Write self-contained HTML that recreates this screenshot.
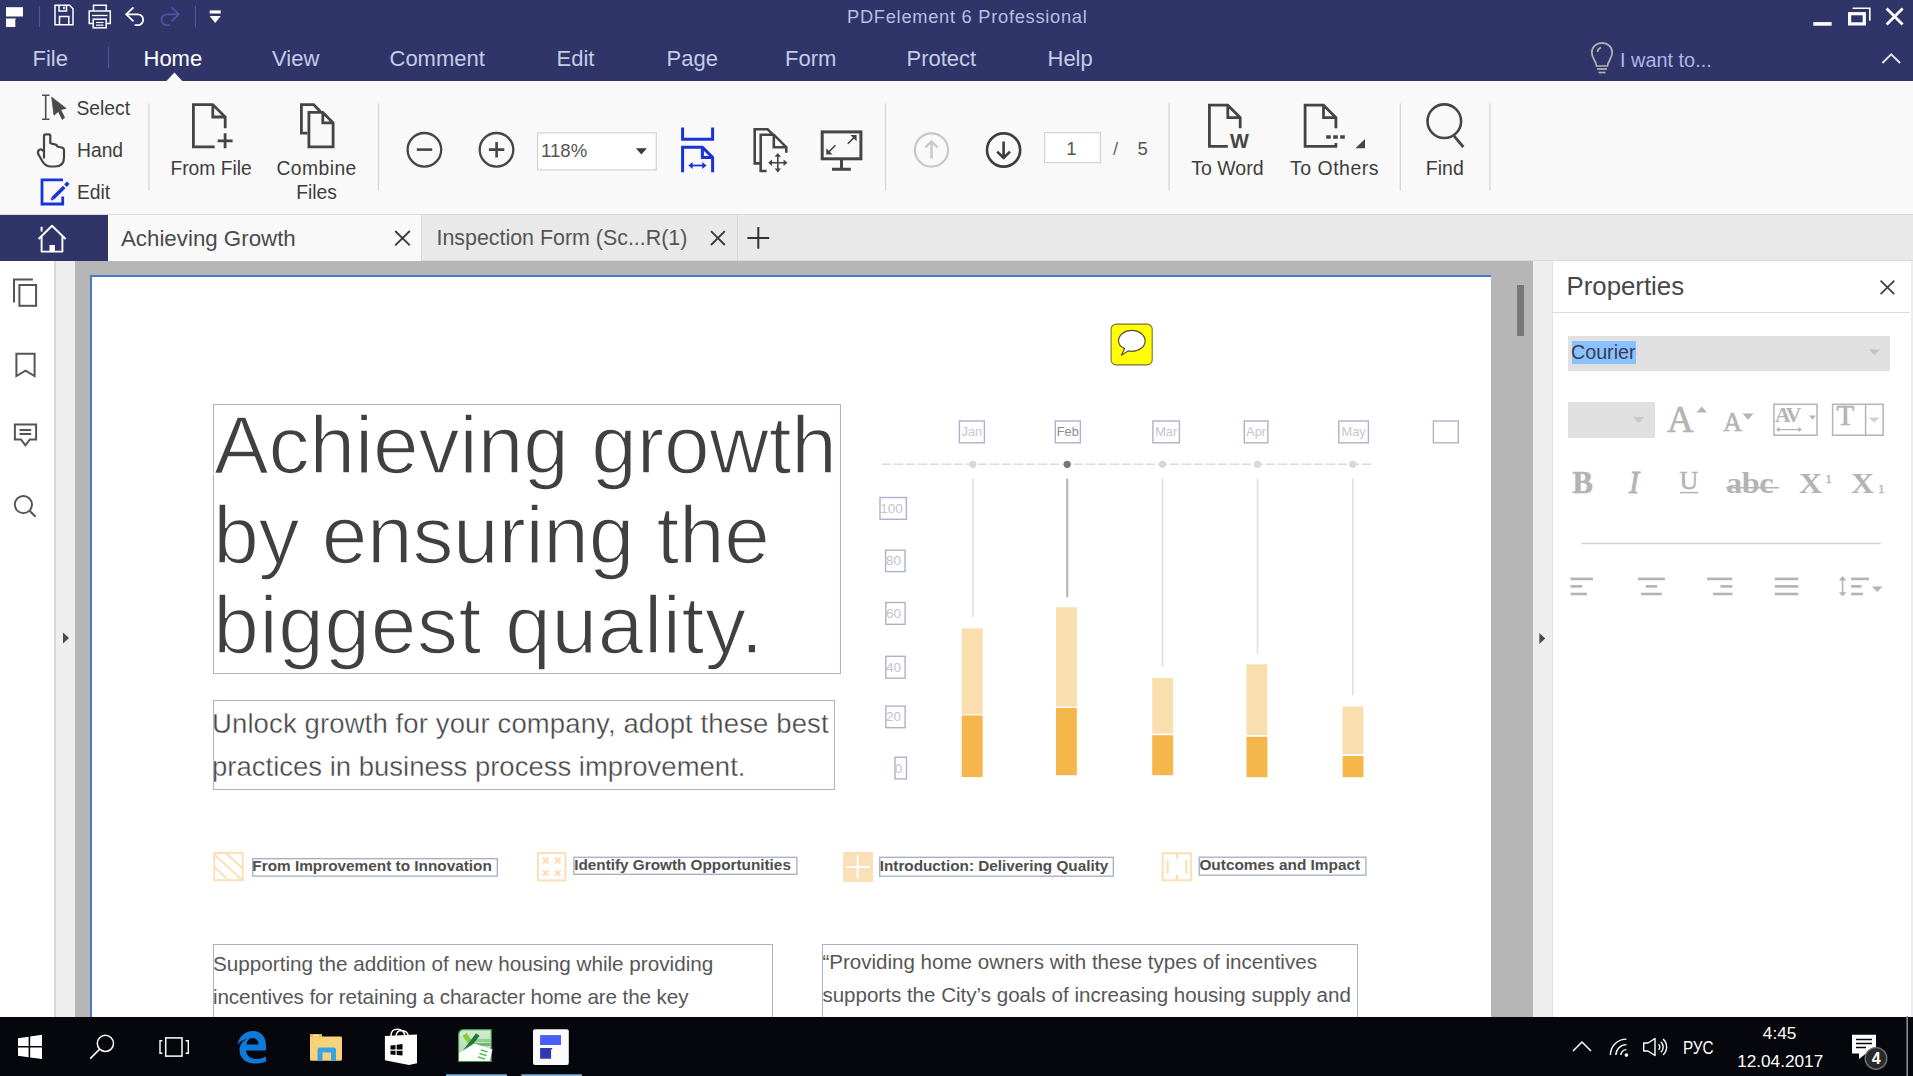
<!DOCTYPE html>
<html><head><meta charset="utf-8">
<style>
*{margin:0;padding:0;box-sizing:border-box}
html,body{width:1913px;height:1076px;overflow:hidden;background:#fff;font-family:"Liberation Sans",sans-serif}
.a{position:absolute}
.t{position:absolute;white-space:nowrap}
svg{overflow:visible}
</style></head><body>
<div class="a" style="left:0px;top:0px;width:1913px;height:81px;background:#2f3469;"></div>
<div class="a" style="left:0px;top:81px;width:1913px;height:134px;background:#f9f9f9;"></div>
<div class="a" style="left:0px;top:215px;width:1913px;height:46px;background:#e9e9e9;"></div>
<div class="a" style="left:0px;top:214px;width:1913px;height:1px;background:#dadada;"></div>
<div class="a" style="left:0px;top:261px;width:1913px;height:756px;background:#b6b6b6;"></div>
<div class="a" style="left:0px;top:261px;width:54px;height:756px;background:#ffffff;"></div>
<div class="a" style="left:54px;top:261px;width:2px;height:756px;background:#d9d9d9;"></div>
<div class="a" style="left:56px;top:261px;width:19px;height:756px;background:#eeeeee;"></div>
<div class="a" style="left:1533px;top:261px;width:19px;height:756px;background:#eeeeee;"></div>
<svg class="a" style="left:0px;top:0px" width="1913" height="81" viewBox="0 0 1913 81">
<rect x="6" y="7.2" width="17" height="9.3" fill="#ffffff"/>
<path d="M6 18.4 H16.3 L15.3 19.6 V27 H6 Z" fill="#ffffff"/>
<line x1="39.5" y1="6" x2="39.5" y2="27" stroke="#4d57a3" stroke-width="1.2"/>
<path d="M55 5.2 H69.5 L73 8.7 V24.8 H55 Z" fill="none" stroke="#ffffff" stroke-width="1.5"/>
<path d="M59 5.5 V11 H66.5 V5.5" fill="none" stroke="#ffffff" stroke-width="1.5"/>
<rect x="63.2" y="6.6" width="1.6" height="2.6" fill="#ffffff"/>
<path d="M59.5 24.8 V16.5 H68.8 V24.8" fill="none" stroke="#ffffff" stroke-width="1.5"/>
<path d="M93.5 10.8 V5.2 H106.3 V10.8" fill="none" stroke="#ffffff" stroke-width="1.5"/>
<path d="M93 23.5 H89.2 V11 H110.3 V23.5 H106.5" fill="none" stroke="#ffffff" stroke-width="1.5"/>
<line x1="92" y1="15.5" x2="107.5" y2="15.5" stroke="#ffffff" stroke-width="1.3"/>
<rect x="93.2" y="19.2" width="13" height="8.6" fill="none" stroke="#ffffff" stroke-width="1.5"/>
<line x1="96" y1="22.5" x2="103.5" y2="22.5" stroke="#ffffff" stroke-width="1.2"/>
<line x1="96" y1="25.2" x2="103.5" y2="25.2" stroke="#ffffff" stroke-width="1.2"/>
<path d="M133.5 7.3 L126.2 14.3 L133.5 21.3 M126.2 14.3 H137.8 A5.4 5.4 0 0 1 137.8 25.1 H134.6" fill="none" stroke="#ffffff" stroke-width="1.8"/>
<path d="M171.5 7.3 L178.8 14.3 L171.5 21.3 M178.8 14.3 H166.8 A5.4 5.4 0 0 0 166.8 25.1 H170" fill="none" stroke="#4b56a6" stroke-width="1.8"/>
<line x1="195.4" y1="6" x2="195.4" y2="26.7" stroke="#4d57a3" stroke-width="1.2"/>
<rect x="209.7" y="10.4" width="11" height="3.1" fill="#ffffff"/>
<path d="M209.7 16 H220.7 L215.2 22.9 Z" fill="#ffffff"/>
<rect x="1813.3" y="22.1" width="18.3" height="3.6" fill="#ffffff"/>
<rect x="1849.6" y="13.7" width="14.7" height="10.2" fill="none" stroke="#ffffff" stroke-width="3.2"/>
<path d="M1852.6 8.2 H1869.8 V20.7" fill="none" stroke="#ffffff" stroke-width="1.6"/>
<path d="M1886.6 8.6 L1902.6 24.6 M1902.6 8.6 L1886.6 24.6" stroke="#ffffff" stroke-width="2.8"/>
<line x1="108.5" y1="46.8" x2="108.5" y2="68.6" stroke="#4d57a3" stroke-width="1.2"/>
<path d="M166.5 81 L174.4 72.6 L182.3 81 Z" fill="#f9f9f9"/>
<path d="M1596.5 66 C1596.5 61 1591.8 59 1591.8 52.5 A10.2 9.6 0 0 1 1612.2 52.5 C1612.2 59 1607.5 61 1607.5 66 Z" fill="none" stroke="#b4b4b4" stroke-width="1.7"/>
<line x1="1597" y1="69" x2="1607" y2="69" stroke="#b4b4b4" stroke-width="1.7"/>
<line x1="1598.5" y1="72.5" x2="1605.5" y2="72.5" stroke="#b4b4b4" stroke-width="1.7"/>
<path d="M1597.5 52 A5 5 0 0 1 1601 47.5" fill="none" stroke="#b4b4b4" stroke-width="1.5"/>
<path d="M1882.4 63 L1891.2 54.3 L1900.1 63" fill="none" stroke="#e6e6e6" stroke-width="2"/>
</svg>
<div class="t " style="left:847px;top:8.31px;font-size:18.3px;line-height:18.3px;color:#b8bfe0;font-weight:400;font-family:'Liberation Sans';letter-spacing:0.72px;">PDFelement 6 Professional</div>
<div class="t " style="left:32.5px;top:48.38px;font-size:22px;line-height:22px;color:#c6cbe6;font-weight:400;font-family:'Liberation Sans';">File</div>
<div class="t " style="left:143.5px;top:48.38px;font-size:22px;line-height:22px;color:#ffffff;font-weight:400;font-family:'Liberation Sans';">Home</div>
<div class="t " style="left:272.0px;top:48.38px;font-size:22px;line-height:22px;color:#c6cbe6;font-weight:400;font-family:'Liberation Sans';">View</div>
<div class="t " style="left:389.5px;top:48.38px;font-size:22px;line-height:22px;color:#c6cbe6;font-weight:400;font-family:'Liberation Sans';">Comment</div>
<div class="t " style="left:556.5px;top:48.38px;font-size:22px;line-height:22px;color:#c6cbe6;font-weight:400;font-family:'Liberation Sans';">Edit</div>
<div class="t " style="left:666.5px;top:48.38px;font-size:22px;line-height:22px;color:#c6cbe6;font-weight:400;font-family:'Liberation Sans';">Page</div>
<div class="t " style="left:785.0px;top:48.38px;font-size:22px;line-height:22px;color:#c6cbe6;font-weight:400;font-family:'Liberation Sans';">Form</div>
<div class="t " style="left:906.5px;top:48.38px;font-size:22px;line-height:22px;color:#c6cbe6;font-weight:400;font-family:'Liberation Sans';">Protect</div>
<div class="t " style="left:1047.5px;top:48.38px;font-size:22px;line-height:22px;color:#c6cbe6;font-weight:400;font-family:'Liberation Sans';">Help</div>
<div class="t " style="left:1620px;top:50.55px;font-size:19.9px;line-height:19.9px;color:#a9b8e8;font-weight:400;font-family:'Liberation Sans';">I want to...</div>
<svg class="a" style="left:0px;top:81px" width="1913" height="134" viewBox="0 81 1913 134"><line x1="149" y1="103.5" x2="149" y2="190.5" stroke="#d6d6d6" stroke-width="1.3"/><line x1="378.5" y1="103.5" x2="378.5" y2="190.5" stroke="#d6d6d6" stroke-width="1.3"/><line x1="885.5" y1="103.5" x2="885.5" y2="190.5" stroke="#d6d6d6" stroke-width="1.3"/><line x1="1169" y1="103.5" x2="1169" y2="190.5" stroke="#d6d6d6" stroke-width="1.3"/><line x1="1400.3" y1="103.5" x2="1400.3" y2="190.5" stroke="#d6d6d6" stroke-width="1.3"/><line x1="1490" y1="103.5" x2="1490" y2="190.5" stroke="#d6d6d6" stroke-width="1.3"/>
<path d="M42 95.2 H49.5 M45.7 95.2 V119.2 M42 119.2 H49.5" fill="none" stroke="#505050" stroke-width="1.6"/>
<path d="M51.7 97.2 L66.2 108.4 L60.6 109.6 L64.6 117.6 L62.2 119.4 L58.4 111.4 L54 115.2 Z" fill="#4a4a4a" stroke="#4a4a4a" stroke-width="0.8" stroke-linejoin="round"/>
<path d="M44 158.5 V136 Q44 134.3 45.5 134.3 H49 Q50.3 134.3 50.3 136 V143.3 L55.6 144.6 Q57 145 57.3 146.5 L62.5 147.8 Q64 148.4 64 150 V157.5 Q64 166.5 55 166.5 H51 Q45.5 166.5 42.5 161.5 L38.2 154 Q37.2 151 39.5 149.8 Q42 148.6 43.8 151.5" fill="none" stroke="#454545" stroke-width="2.2" stroke-linejoin="round"/>
<path d="M63 179.9 H42 V204 H62.7 V196.5" fill="none" stroke="#1a33d6" stroke-width="2.8"/>
<path d="M52.6 198.6 L64.2 187" stroke="#1a33d6" stroke-width="3.6" stroke-linecap="butt"/>
<path d="M51.2 199.8 L52.6 198.6" stroke="#1a33d6" stroke-width="2.5"/>
<path d="M65.4 185.6 L68.3 182.8" stroke="#1a33d6" stroke-width="3.6"/>
<path d="M214.7 146.9 H193.4 V104.6 H212.8 L225.2 117 V128.3 M212.8 104.6 V117 H225.2" fill="none" stroke="#454545" stroke-width="2.8"/>
<path d="M217.6 140.8 H232.6 M225.1 133.3 V148.3" fill="none" stroke="#454545" stroke-width="2.8"/>
<path d="M307.5 133.1 H301.4 V104.6 H313.6 L320.4 111.6" fill="none" stroke="#454545" stroke-width="2.8"/>
<path d="M308.9 112.4 H322.8 L333.1 122.8 V146.9 H308.9 Z M322.8 112.4 V122.8 H333.1" fill="none" stroke="#454545" stroke-width="2.8"/>
<circle cx="424.4" cy="149.8" r="16.8" fill="none" stroke="#454545" stroke-width="2.3"/>
<path d="M416.8 149.6 H432.2" stroke="#454545" stroke-width="2.6"/>
<circle cx="496.5" cy="149.8" r="16.8" fill="none" stroke="#454545" stroke-width="2.3"/>
<path d="M488.9 149.6 H504.3 M496.6 142 V157.4" stroke="#454545" stroke-width="2.6"/>
<rect x="537.6" y="132.9" width="118.6" height="37" fill="#fff" stroke="#cbcbcb" stroke-width="1"/>
<path d="M635.9 148.3 H646.9 L641.4 154.6 Z" fill="#3a3a3a"/>
<path d="M682.6 127.4 V139.2 H712.6 V127.4" fill="none" stroke="#1a33d6" stroke-width="3"/>
<path d="M682.6 172.3 V147.3 H702.4 L712.6 157.4 V172.3 M702.4 147.3 V157.4 H712.6" fill="none" stroke="#1a33d6" stroke-width="3"/>
<path d="M691 165.5 H704" stroke="#1a33d6" stroke-width="1.8"/>
<path d="M688.4 165.5 L692.6 162 V169 Z M706.5 165.5 L702.3 162 V169 Z" fill="#1a33d6"/>
<path d="M760.2 163.4 H754.7 V129.2 H767.5 L772.5 134.2" fill="none" stroke="#454545" stroke-width="2.6"/>
<path d="M766.6 171 H760.7 V134.7 H773.8 L786.3 147.2 V152.7 M773.8 134.7 V147.2 H786.3" fill="none" stroke="#454545" stroke-width="2.6"/>
<path d="M777.8 154 V171.4 M769.2 162.7 H786.4" stroke="#454545" stroke-width="1.6"/>
<path d="M777.8 153 L774.6 156.8 H781 Z M777.8 172.4 L774.6 168.6 H781 Z M768.2 162.7 L772 159.5 V165.9 Z M787.4 162.7 L783.6 159.5 V165.9 Z" fill="#454545"/>
<rect x="822.2" y="131.9" width="38.7" height="26.9" fill="none" stroke="#454545" stroke-width="3"/>
<path d="M841.5 160 V169 M832 169.2 H850.8" stroke="#454545" stroke-width="3"/>
<path d="M828 152.8 L835.5 145.3 M847.8 143.8 L855 136.6" stroke="#454545" stroke-width="1.6"/>
<path d="M826.3 154.5 V148.3 L832.5 154.5 Z M856.6 135 V141.2 L850.4 135 Z" fill="#454545"/>
<circle cx="931.5" cy="150" r="16.6" fill="none" stroke="#c8c8c8" stroke-width="2.2"/>
<path d="M931.5 158.5 V141.5 M925.3 147.5 L931.5 141.5 L937.7 147.5" fill="none" stroke="#c8c8c8" stroke-width="2.4"/>
<circle cx="1003.6" cy="150" r="16.6" fill="none" stroke="#3d3d3d" stroke-width="2.6"/>
<path d="M1003.6 141.5 V158 M997.2 151.6 L1003.6 158 L1010 151.6" fill="none" stroke="#3d3d3d" stroke-width="2.6"/>
<rect x="1044.7" y="132.7" width="55.6" height="30" fill="#fff" stroke="#cbcbcb" stroke-width="1"/>
<path d="M1227.8 146.4 H1209.4 V105.2 H1227.8 L1240.2 117.6 V128.3 M1227.8 105.2 V117.6 H1240.2" fill="none" stroke="#454545" stroke-width="2.8"/>

<path d="M1337 146.4 H1305.1 V105.2 H1323.5 L1335.9 117.6 V128.3 M1323.5 105.2 V117.6 H1335.9 M1335.9 143 V147.8" fill="none" stroke="#454545" stroke-width="2.8"/>
<path d="M1326.2 137 H1345.5" stroke="#454545" stroke-width="3.6" stroke-dasharray="4.6 2.4"/>
<path d="M1355.4 148.3 L1365 139 V148.3 Z" fill="#454545"/>
<circle cx="1444.3" cy="121.2" r="16.8" fill="none" stroke="#454545" stroke-width="2.6"/>
<path d="M1454 135.8 L1463.3 147" stroke="#454545" stroke-width="2.8"/>
</svg>
<div class="t " style="left:76.5px;top:99.06px;font-size:19.3px;line-height:19.3px;color:#3d3d3d;font-weight:400;font-family:'Liberation Sans';">Select</div>
<div class="t " style="left:77px;top:141.16px;font-size:19.3px;line-height:19.3px;color:#3d3d3d;font-weight:400;font-family:'Liberation Sans';">Hand</div>
<div class="t " style="left:77px;top:183.46px;font-size:19.3px;line-height:19.3px;color:#3d3d3d;font-weight:400;font-family:'Liberation Sans';">Edit</div>
<div class="t" style="left:-88.9px;width:600px;text-align:center;top:158.96px;font-size:19.3px;line-height:19.3px;color:#3d3d3d;font-weight:400;">From File</div>
<div class="t" style="left:16.600000000000023px;width:600px;text-align:center;top:158.96px;font-size:19.3px;line-height:19.3px;color:#3d3d3d;font-weight:400;letter-spacing:0.45px;">Combine</div>
<div class="t" style="left:16.5px;width:600px;text-align:center;top:182.86px;font-size:19.3px;line-height:19.3px;color:#3d3d3d;font-weight:400;">Files</div>
<div class="t " style="left:541px;top:142.26px;font-size:18.6px;line-height:18.6px;color:#555;font-weight:400;font-family:'Liberation Sans';">118%</div>
<div class="t" style="left:771.5px;width:600px;text-align:center;top:139.86px;font-size:18.6px;line-height:18.6px;color:#555;font-weight:400;">1</div>
<div class="t " style="left:1113px;top:139.86px;font-size:18.6px;line-height:18.6px;color:#666;font-weight:400;font-family:'Liberation Sans';">/</div>
<div class="t " style="left:1137.5px;top:139.86px;font-size:18.6px;line-height:18.6px;color:#555;font-weight:400;font-family:'Liberation Sans';">5</div>
<div class="t" style="left:927.4000000000001px;width:600px;text-align:center;top:158.89px;font-size:19.5px;line-height:19.5px;color:#3d3d3d;font-weight:400;">To Word</div>
<div class="t" style="left:1034.5px;width:600px;text-align:center;top:158.89px;font-size:19.5px;line-height:19.5px;color:#3d3d3d;font-weight:400;letter-spacing:0.5px;">To Others</div>
<div class="t" style="left:1144.8px;width:600px;text-align:center;top:158.89px;font-size:19.5px;line-height:19.5px;color:#3d3d3d;font-weight:400;">Find</div>
<div class="t " style="left:1230px;top:130.87px;font-size:20px;line-height:20px;color:#454545;font-weight:700;font-family:'Liberation Sans';">W</div>
<div class="a" style="left:0px;top:215px;width:108px;height:46px;background:#2f3469;"></div>
<div class="a" style="left:108px;top:215px;width:314px;height:46px;background:#f9f9f9;"></div>
<div class="a" style="left:421px;top:215px;width:1px;height:46px;background:#d8d8d8;"></div>
<div class="a" style="left:737px;top:215px;width:1px;height:46px;background:#d6d6d6;"></div>
<div class="a" style="left:422px;top:260px;width:1491px;height:1px;background:#dadada;"></div>
<svg class="a" style="left:0px;top:215px" width="800" height="46" viewBox="0 215 800 46">
<path d="M38.6 239 L52 225.8 L65.6 239 M41.6 236 V251.6 H62.4 V236" fill="none" stroke="#fff" stroke-width="1.9" stroke-linejoin="round"/>
<path d="M41.6 231.5 V226.8" stroke="#fff" stroke-width="2"/>
<rect x="49.5" y="245" width="5.4" height="6.8" fill="#fff"/>
<path d="M395.2 231 L409.8 245.4 M409.8 231 L395.2 245.4" stroke="#3c3c3c" stroke-width="1.9"/>
<path d="M711 231.2 L724.8 245 M724.8 231.2 L711 245" stroke="#3c3c3c" stroke-width="1.9"/>
<path d="M747.4 238 H769.2 M758.3 227 V248.8" stroke="#333" stroke-width="2"/>
</svg>
<div class="t " style="left:121px;top:227.52px;font-size:22.3px;line-height:22.3px;color:#4a4a4a;font-weight:400;font-family:'Liberation Sans';">Achieving Growth</div>
<div class="t " style="left:436.5px;top:228.28px;font-size:21.4px;line-height:21.4px;color:#555555;font-weight:400;font-family:'Liberation Sans';">Inspection Form (Sc...R(1)</div>
<div class="a" style="left:90px;top:275px;width:1401px;height:742px;background:#ffffff;"></div>
<div class="a" style="left:90px;top:275px;width:1401px;height:2px;background:#4a79cb;"></div>
<div class="a" style="left:90px;top:275px;width:2px;height:742px;background:#4a79cb;"></div>
<div class="a" style="left:1516.5px;top:285px;width:7.5px;height:51px;background:#777777;"></div>
<svg class="a" style="left:0px;top:261px" width="1913" height="755" viewBox="0 261 1913 755">
<path d="M14 302.6 V279.6 H32.9" fill="none" stroke="#555555" stroke-width="2"/>
<rect x="19.4" y="285" width="16.7" height="20.8" fill="none" stroke="#555555" stroke-width="2"/>
<path d="M16.4 376 V353.8 H34.6 V376 L25.5 370.6 Z" fill="none" stroke="#555555" stroke-width="2" stroke-linejoin="miter"/>
<path d="M14.9 424.4 H36.1 V439.4 H29.8 L25.4 445.4 L21 439.4 H14.9 Z" fill="none" stroke="#555555" stroke-width="2"/>
<path d="M19.5 429.9 H31.2 M19.5 434.1 H31.2" stroke="#555555" stroke-width="2"/>
<circle cx="23.4" cy="504.6" r="8.6" fill="none" stroke="#555555" stroke-width="1.9"/>
<path d="M29.6 510.8 L35.6 516.8" stroke="#555555" stroke-width="2"/>
<path d="M63 632.6 L69 638 L63 643.5 Z" fill="#4a4a4a"/>
<path d="M1539.4 632.9 L1545.2 638.4 L1539.4 644 Z" fill="#4a4a4a"/>
</svg>
<div class="a" style="left:1552px;top:261px;width:1px;height:756px;background:#e4e4e4;"></div>
<div class="a" style="left:1553px;top:261px;width:360px;height:756px;background:#ffffff;"></div>
<div class="a" style="left:1911px;top:261px;width:2px;height:756px;background:#ececec;"></div>
<div class="t " style="left:1566.5px;top:273.66px;font-size:25.8px;line-height:25.8px;color:#474747;font-weight:400;font-family:'Liberation Sans';">Properties</div>
<div class="a" style="left:1552px;top:311.8px;width:358px;height:1.5px;background:#dcdcdc;"></div>
<div class="a" style="left:1567.5px;top:336.4px;width:322.3px;height:34.9px;background:#e0e0e0;"></div>
<div class="a" style="left:1571.8px;top:340.8px;width:64.7px;height:23px;background:#8ac2ff;"></div>
<div class="t " style="left:1571px;top:342.92px;font-size:19.7px;line-height:19.7px;color:#383c58;font-weight:400;font-family:'Liberation Sans';">Courier</div>
<div class="a" style="left:1567.5px;top:401.9px;width:87px;height:35.8px;background:#e0e0e0;"></div>
<svg class="a" style="left:1552px;top:261px" width="361" height="755" viewBox="1552 261 361 755">
<path d="M1880.6 280.6 L1894.3 294.2 M1894.3 280.6 L1880.6 294.2" stroke="#444" stroke-width="1.8"/>
<path d="M1869 349.6 H1880 L1874.5 355.3 Z" fill="#c4c4c4"/>
<path d="M1633 417 H1644.5 L1638.7 423 Z" fill="#c8c8c8"/>
<path d="M1696.4 412.6 H1707 L1701.7 406.4 Z" fill="#b4b4b4"/>
<path d="M1742.6 413.6 H1753.5 L1748 419.8 Z" fill="#b4b4b4"/>
<rect x="1773.9" y="404.3" width="43.1" height="30.9" fill="none" stroke="#b4b4b4" stroke-width="1.5"/>
<path d="M1778 429.6 H1800" stroke="#b4b4b4" stroke-width="1.3"/>
<path d="M1776 429.6 L1779.5 427 V432.2 Z M1802 429.6 L1798.5 427 V432.2 Z" fill="#b4b4b4"/>
<path d="M1809 415.5 H1816 L1812.5 419.8 Z" fill="#b4b4b4"/>
<rect x="1832.6" y="404.3" width="50.5" height="30.9" fill="none" stroke="#b4b4b4" stroke-width="1.5"/>
<path d="M1865.6 404.3 V435.2" stroke="#b4b4b4" stroke-width="1.5"/>
<path d="M1868.7 417.4 H1879.4 L1874 422.5 Z" fill="#d2d2d2"/>
<path d="M1680 492.6 H1698.3" stroke="#b4b4b4" stroke-width="1.5"/>
<path d="M1726 487.8 H1779" stroke="#b4b4b4" stroke-width="1.6"/>
<path d="M1581.3 543.6 H1880.7" stroke="#d2d2d2" stroke-width="1.5"/>
</svg>
<div class="t " style="left:1667px;top:400.58px;font-size:37px;line-height:37px;color:#b4b4b4;font-weight:400;font-family:'Liberation Serif';-webkit-text-stroke:0.7px #b4b4b4;">A</div>
<div class="t " style="left:1723px;top:409.47px;font-size:26.5px;line-height:26.5px;color:#b4b4b4;font-weight:400;font-family:'Liberation Serif';-webkit-text-stroke:0.6px #b4b4b4;">A</div>
<div class="t " style="left:1775px;top:405.00px;font-size:21.5px;line-height:21.5px;color:#b4b4b4;font-weight:700;font-family:'Liberation Serif';letter-spacing:-2px;">AV</div>
<div class="t " style="left:1836.5px;top:401.35px;font-size:29px;line-height:29px;color:#b4b4b4;font-weight:400;font-family:'Liberation Serif';-webkit-text-stroke:0.7px #b4b4b4;">T</div>
<div class="t " style="left:1572.5px;top:467.58px;font-size:30.5px;line-height:30.5px;color:#b4b4b4;font-weight:700;font-family:'Liberation Serif';-webkit-text-stroke:0.6px #b4b4b4;">B</div>
<div class="t " style="left:1629px;top:467.58px;font-size:30.5px;line-height:30.5px;color:#b4b4b4;font-weight:400;font-family:'Liberation Serif';font-style:italic;-webkit-text-stroke:0.8px #b4b4b4;">I</div>
<div class="t " style="left:1679.5px;top:468.19px;font-size:26px;line-height:26px;color:#b4b4b4;font-weight:400;font-family:'Liberation Serif';-webkit-text-stroke:0.5px #b4b4b4;">U</div>
<div class="t " style="left:1726px;top:468.21px;font-size:30px;line-height:30px;color:#b4b4b4;font-weight:700;font-family:'Liberation Serif';letter-spacing:-0.5px;transform:scaleX(1.08);transform-origin:0 0;">abc</div>
<div class="t " style="left:1798.5px;top:468.85px;font-size:29px;line-height:29px;color:#b4b4b4;font-weight:700;font-family:'Liberation Serif';transform:scaleX(1.1);transform-origin:0 0;">X</div>
<div class="t " style="left:1825.5px;top:473.02px;font-size:12.5px;line-height:12.5px;color:#b4b4b4;font-weight:400;font-family:'Liberation Serif';-webkit-text-stroke:0.4px #b4b4b4;">1</div>
<div class="t " style="left:1851px;top:468.85px;font-size:29px;line-height:29px;color:#b4b4b4;font-weight:700;font-family:'Liberation Serif';transform:scaleX(1.1);transform-origin:0 0;">X</div>
<div class="t " style="left:1878.3px;top:483.02px;font-size:12.5px;line-height:12.5px;color:#b4b4b4;font-weight:400;font-family:'Liberation Serif';-webkit-text-stroke:0.4px #b4b4b4;">1</div>
<svg class="a" style="left:1552px;top:540px" width="361" height="80" viewBox="1552 540 361 80"><path d="M1570.5 578.9 H1593" stroke="#b4b4b4" stroke-width="2.6"/><path d="M1570.5 586.4 H1582.2" stroke="#b4b4b4" stroke-width="2.6"/><path d="M1570.5 594 H1586.9" stroke="#b4b4b4" stroke-width="2.6"/><path d="M1638 578.9 H1664.9" stroke="#b4b4b4" stroke-width="2.6"/><path d="M1645.8 586.4 H1657.3" stroke="#b4b4b4" stroke-width="2.6"/><path d="M1641 594 H1661.8" stroke="#b4b4b4" stroke-width="2.6"/><path d="M1707.1 578.9 H1732.4" stroke="#b4b4b4" stroke-width="2.6"/><path d="M1720.5 586.4 H1732.4" stroke="#b4b4b4" stroke-width="2.6"/><path d="M1713 594 H1732.4" stroke="#b4b4b4" stroke-width="2.6"/><path d="M1774.7 578.9 H1798.3" stroke="#b4b4b4" stroke-width="2.6"/><path d="M1774.7 586.4 H1798.3" stroke="#b4b4b4" stroke-width="2.6"/><path d="M1774.7 594 H1798.3" stroke="#b4b4b4" stroke-width="2.6"/><path d="M1851.1 578.9 H1869" stroke="#b4b4b4" stroke-width="2.6"/><path d="M1851.1 586.4 H1861.5" stroke="#b4b4b4" stroke-width="2.6"/><path d="M1851.1 594 H1863" stroke="#b4b4b4" stroke-width="2.6"/><path d="M1842.6 578 V594.6" stroke="#b4b4b4" stroke-width="1.6"/><path d="M1842.6 576 L1838.8 580.4 H1846.4 Z M1842.6 596.6 L1838.8 592.2 H1846.4 Z" fill="#b4b4b4"/><path d="M1871.9 586.4 H1882.6 L1877.2 592.1 Z" fill="#b4b4b4"/></svg>
<div class="a" style="left:213px;top:404px;width:628px;height:270px;border:1px solid #aab3cb"></div>
<div class="t " style="left:214px;top:404.39px;font-size:82px;line-height:82px;color:#404040;font-weight:400;font-family:'Liberation Sans';letter-spacing:-0.1px;-webkit-text-stroke:1.6px #fff;">Achieving growth</div>
<div class="t " style="left:213.3px;top:494.49px;font-size:82px;line-height:82px;color:#404040;font-weight:400;font-family:'Liberation Sans';letter-spacing:-0.3px;-webkit-text-stroke:1.6px #fff;">by ensuring the</div>
<div class="t " style="left:213.3px;top:583.79px;font-size:82px;line-height:82px;color:#404040;font-weight:400;font-family:'Liberation Sans';letter-spacing:0.6px;-webkit-text-stroke:1.6px #fff;">biggest quality.</div>
<div class="a" style="left:213px;top:700px;width:622px;height:89.5px;border:1px solid #aab3cb"></div>
<div class="t " style="left:212px;top:709.62px;font-size:27.5px;line-height:27.5px;color:#454545;font-weight:400;font-family:'Liberation Sans';letter-spacing:0.12px;-webkit-text-stroke:0.35px #fff;">Unlock growth for your company, adopt these best</div>
<div class="t " style="left:212px;top:753.42px;font-size:27.5px;line-height:27.5px;color:#454545;font-weight:400;font-family:'Liberation Sans';-webkit-text-stroke:0.35px #fff;">practices in business process improvement.</div>
<svg class="a" style="left:860px;top:310px" width="640" height="480" viewBox="860 310 640 480"><rect x="1111.1" y="324.1" width="41.1" height="40.8" rx="5" fill="#ffff00" stroke="#7d6d45" stroke-width="1.1"/><path d="M1124.6 348.6 C1119.8 346.4 1118.5 343.6 1118.5 340.9 C1118.5 335 1124.4 330.4 1131.8 330.4 C1139.2 330.4 1145.1 335 1145.1 340.9 C1145.1 346.8 1139.2 351.3 1131.8 351.3 C1130.4 351.3 1129.2 351.2 1128 350.9 L1121.4 355.2 Z" fill="#ffffff" stroke="#5d4d35" stroke-width="1.2" stroke-linejoin="round"/><rect x="959.4" y="421" width="25.000000000000046" height="21.8" fill="none" stroke="#aab3cb" stroke-width="1.4"/><rect x="1055.3" y="421" width="25.099999999999955" height="21.8" fill="none" stroke="#aab3cb" stroke-width="1.4"/><rect x="1152.8999999999999" y="421" width="26.500000000000046" height="21.8" fill="none" stroke="#aab3cb" stroke-width="1.4"/><rect x="1244.3" y="421" width="23.599999999999955" height="21.8" fill="none" stroke="#aab3cb" stroke-width="1.4"/><rect x="1338.8" y="421" width="29.599999999999955" height="21.8" fill="none" stroke="#aab3cb" stroke-width="1.4"/><rect x="1433.3999999999999" y="421" width="24.900000000000137" height="21.8" fill="none" stroke="#aab3cb" stroke-width="1.4"/><path d="M882 464.3 H1373.4" stroke="#dadada" stroke-width="1.5" stroke-dasharray="9 3"/><circle cx="972.9" cy="464.3" r="3.6" fill="#d8d8d8"/><circle cx="1067.2" cy="464.3" r="3.6" fill="#787878"/><circle cx="1162.5" cy="464.3" r="3.6" fill="#d8d8d8"/><circle cx="1257.5" cy="464.3" r="3.6" fill="#d8d8d8"/><circle cx="1352.8" cy="464.3" r="3.6" fill="#d8d8d8"/><path d="M972.9 478.6 V617" stroke="#e0e0e0" stroke-width="1.6"/><path d="M1162.5 478.6 V666.9" stroke="#e0e0e0" stroke-width="1.6"/><path d="M1257.5 478.6 V653.8" stroke="#e0e0e0" stroke-width="1.6"/><path d="M1352.8 478.6 V695.6" stroke="#e0e0e0" stroke-width="1.6"/><path d="M1067.2 478.6 V597.2" stroke="#b2b2b2" stroke-width="2"/><rect x="961.7" y="628.4" width="20.899999999999977" height="85.89999999999998" fill="#f9dfae"/><rect x="961.7" y="715.4" width="20.899999999999977" height="61.700000000000045" fill="#f5b74c"/><rect x="1056" y="607.3" width="20.90000000000009" height="99.30000000000007" fill="#f9dfae"/><rect x="1056" y="708" width="20.90000000000009" height="67.20000000000005" fill="#f5b74c"/><rect x="1152.2" y="678" width="20.899999999999864" height="55.5" fill="#f9dfae"/><rect x="1152.2" y="735.2" width="20.899999999999864" height="40.0" fill="#f5b74c"/><rect x="1246.5" y="664.3" width="20.90000000000009" height="70.70000000000005" fill="#f9dfae"/><rect x="1246.5" y="736.8" width="20.90000000000009" height="40.40000000000009" fill="#f5b74c"/><rect x="1342.6" y="706.5" width="20.90000000000009" height="47.5" fill="#f9dfae"/><rect x="1342.6" y="756" width="20.90000000000009" height="21.200000000000045" fill="#f5b74c"/><rect x="880.0" y="497.5" width="26.400000000000023" height="21.8" fill="none" stroke="#aab3cb" stroke-width="1.4"/><rect x="885.6" y="550.2" width="19.400000000000023" height="21.400000000000023" fill="none" stroke="#aab3cb" stroke-width="1.4"/><rect x="885.8000000000001" y="602.5" width="19.3" height="21.8" fill="none" stroke="#aab3cb" stroke-width="1.4"/><rect x="885.8000000000001" y="656.3000000000001" width="19.3" height="21.89999999999991" fill="none" stroke="#aab3cb" stroke-width="1.4"/><rect x="885.8000000000001" y="706.1" width="19.3" height="21.599999999999955" fill="none" stroke="#aab3cb" stroke-width="1.4"/><rect x="895.0" y="757.2" width="11.500000000000046" height="21.699999999999978" fill="none" stroke="#aab3cb" stroke-width="1.4"/></svg>
<div class="t" style="left:671.9px;width:600px;text-align:center;top:425.76px;font-size:12.8px;line-height:12.8px;color:#c8c8c8;font-weight:400;">Jan</div>
<div class="t" style="left:767.8px;width:600px;text-align:center;top:425.76px;font-size:12.8px;line-height:12.8px;color:#8c8c8c;font-weight:400;">Feb</div>
<div class="t" style="left:866.2px;width:600px;text-align:center;top:425.76px;font-size:12.8px;line-height:12.8px;color:#c8c8c8;font-weight:400;">Mar</div>
<div class="t" style="left:956.0999999999999px;width:600px;text-align:center;top:425.76px;font-size:12.8px;line-height:12.8px;color:#c8c8c8;font-weight:400;">Apr</div>
<div class="t" style="left:1053.6px;width:600px;text-align:center;top:425.76px;font-size:12.8px;line-height:12.8px;color:#c8c8c8;font-weight:400;">May</div>
<div class="t " style="left:880.3px;top:501.57px;font-size:13.5px;line-height:13.5px;color:#c4c4c4;font-weight:400;font-family:'Liberation Sans';">100</div>
<div class="t " style="left:886px;top:554.07px;font-size:13.5px;line-height:13.5px;color:#c4c4c4;font-weight:400;font-family:'Liberation Sans';">80</div>
<div class="t " style="left:886px;top:606.57px;font-size:13.5px;line-height:13.5px;color:#c4c4c4;font-weight:400;font-family:'Liberation Sans';">60</div>
<div class="t " style="left:886px;top:660.57px;font-size:13.5px;line-height:13.5px;color:#c4c4c4;font-weight:400;font-family:'Liberation Sans';">40</div>
<div class="t " style="left:886px;top:710.07px;font-size:13.5px;line-height:13.5px;color:#c4c4c4;font-weight:400;font-family:'Liberation Sans';">20</div>
<div class="t " style="left:894.8px;top:761.57px;font-size:13.5px;line-height:13.5px;color:#c4c4c4;font-weight:400;font-family:'Liberation Sans';">0</div>
<svg class="a" style="left:200px;top:840px" width="1200" height="50" viewBox="200 840 1200 50"><rect x="214.2" y="852.9" width="28.5" height="27.3" fill="none" stroke="#fbdfb6" stroke-width="2"/><path d="M215 855 L241.5 879.5 M226 853 L242.5 868.5 M214.5 867 L228 880" stroke="#fbdfb6" stroke-width="1.8"/><rect x="538" y="853" width="27.4" height="27.4" fill="none" stroke="#fbdfb6" stroke-width="2"/><path d="M542.8000000000001 857.8000000000001 L548.4 863.4 M548.4 857.8000000000001 L542.8000000000001 863.4" stroke="#fbdfb6" stroke-width="2.2"/><path d="M555.0 857.8000000000001 L560.5999999999999 863.4 M560.5999999999999 857.8000000000001 L555.0 863.4" stroke="#fbdfb6" stroke-width="2.2"/><path d="M542.8000000000001 870.2 L548.4 875.8 M548.4 870.2 L542.8000000000001 875.8" stroke="#fbdfb6" stroke-width="2.2"/><path d="M555.0 870.2 L560.5999999999999 875.8 M560.5999999999999 870.2 L555.0 875.8" stroke="#fbdfb6" stroke-width="2.2"/><rect x="843.2" y="852" width="29.8" height="29.9" fill="#fbdfb6"/><path d="M846 867 H869.8 M857.7 855.2 V878.7" stroke="#ffffff" stroke-width="2"/><rect x="1162.7" y="853.2" width="28.4" height="27.1" fill="none" stroke="#fbdfb6" stroke-width="2"/><path d="M1167.6 860 V873.5 M1186.2 860 V873.5 M1177 853 V859 M1177 874.5 V880.5" stroke="#fbdfb6" stroke-width="2.2"/><rect x="252.8" y="858.7" width="244.5" height="17.399999999999977" fill="none" stroke="#a3adc6" stroke-width="1.3"/><rect x="573.9" y="857.3" width="223.0" height="17.0" fill="none" stroke="#a3adc6" stroke-width="1.3"/><rect x="879.7" y="857.3" width="233.5999999999999" height="18.90000000000009" fill="none" stroke="#a3adc6" stroke-width="1.3"/><rect x="1199.2" y="857.2" width="166.70000000000005" height="18.0" fill="none" stroke="#a3adc6" stroke-width="1.3"/></svg>
<div class="t " style="left:252.3px;top:858.31px;font-size:15.35px;line-height:15.35px;color:#4e4e4e;font-weight:700;font-family:'Liberation Sans';">From Improvement to Innovation</div>
<div class="t " style="left:574.2px;top:857.05px;font-size:15.3px;line-height:15.3px;color:#4e4e4e;font-weight:700;font-family:'Liberation Sans';">Identify Growth Opportunities</div>
<div class="t " style="left:879.7px;top:857.65px;font-size:15.3px;line-height:15.3px;color:#4e4e4e;font-weight:700;font-family:'Liberation Sans';">Introduction: Delivering Quality</div>
<div class="t " style="left:1199.4px;top:857.06px;font-size:15.4px;line-height:15.4px;color:#4e4e4e;font-weight:700;font-family:'Liberation Sans';">Outcomes and Impact</div>
<div class="a" style="left:213px;top:944px;width:560px;height:100px;border:1px solid #aab3cb"></div>
<div class="a" style="left:822px;top:944px;width:536px;height:100px;border:1px solid #aab3cb"></div>
<div class="t " style="left:213px;top:954.48px;font-size:20.7px;line-height:20.7px;color:#575757;font-weight:400;font-family:'Liberation Sans';">Supporting the addition of new housing while providing</div>
<div class="t " style="left:213px;top:987.48px;font-size:20.7px;line-height:20.7px;color:#575757;font-weight:400;font-family:'Liberation Sans';letter-spacing:-0.12px;">incentives for retaining a character home are the key</div>
<div class="t " style="left:822.4px;top:952.10px;font-size:20.55px;line-height:20.55px;color:#575757;font-weight:400;font-family:'Liberation Sans';">“Providing home owners with these types of incentives</div>
<div class="t " style="left:822.4px;top:984.80px;font-size:20.55px;line-height:20.55px;color:#575757;font-weight:400;font-family:'Liberation Sans';">supports the City’s goals of increasing housing supply and</div>
<div class="a" style="left:0px;top:1017px;width:1913px;height:59px;background:#05070c;"></div>
<svg class="a" style="left:0px;top:1016px" width="1913" height="60" viewBox="0 1016 1913 60"><path d="M18 1038.3 L28.6 1036.8 V1046 H18 Z M30.2 1036.5 L42 1034.8 V1046 H30.2 Z M18 1047.6 H28.6 V1057.3 L18 1055.8 Z M30.2 1047.6 H42 V1059.1 L30.2 1057.5 Z" fill="#fff"/><circle cx="105.4" cy="1043.4" r="8.1" fill="none" stroke="#fff" stroke-width="1.5"/><path d="M99.7 1049.1 L90.2 1058.6" stroke="#fff" stroke-width="1.6"/><rect x="165.7" y="1037.9" width="16.3" height="18.2" fill="none" stroke="#fff" stroke-width="1.5"/><path d="M162.4 1040.8 H160 V1053.2 H162.4 M185.6 1040.8 H188.3 V1053.2 H185.6" fill="none" stroke="#fff" stroke-width="1.4"/><path d="M237.5 1045 C239 1035.5 246 1031 253 1031 C261.5 1031 266 1037.5 266 1045.5 V1050.5 H246 C246.5 1056 251 1059 256.5 1059 C260 1059 263.5 1058 266 1056.5 V1061.5 C263 1063 259 1063.5 255 1063.5 C245 1063.5 239.5 1057.5 239.5 1050 C239.5 1044.5 243 1040.5 247.5 1039 C243 1039.5 239.5 1042 237.5 1045 Z M246.5 1044.5 H258.5 C258.5 1040.5 256 1038 252.5 1038 C249.5 1038 247 1040.5 246.5 1044.5 Z" fill="#0d7bd9" fill-rule="evenodd"/><path d="M310 1035.5 Q310 1034 311.5 1034 H320 L322.5 1036.6 H340.5 Q342 1036.6 342 1038 V1059.2 Q342 1060.7 340.5 1060.7 H311.5 Q310 1060.7 310 1059.2 Z" fill="#f6d37a"/><rect x="310" y="1034" width="12" height="3" fill="#e9b64c"/><rect x="313" y="1035.2" width="6" height="1" fill="#fff"/><path d="M317.5 1060.7 V1050 Q317.5 1047.5 320 1047.5 H333.5 Q336 1047.5 336 1050 V1060.7 H331 V1052.5 H322.5 V1060.7 Z" fill="#36a3e6"/><path d="M384.9 1036 L417 1034.6 V1063.2 L409 1064.9 L384.9 1060.2 Z" fill="#fff"/><path d="M391 1036 C391 1030 394 1029.3 397.5 1029.3 C401 1029.3 404 1031 405 1036 M396 1036 C396.5 1031.5 399 1030.5 401.5 1030.5 C405 1030.5 407.5 1032 408.5 1036" fill="none" stroke="#fff" stroke-width="1.4"/><path d="M390.5 1045.6 L395.5 1045 V1049.6 H390.5 Z M396.7 1044.8 L402.5 1044 V1049.6 H396.7 Z M390.5 1050.8 H395.5 V1055 L390.5 1054.5 Z M396.7 1050.8 H402.5 V1055.6 L396.7 1055.1 Z" fill="#05070c"/><defs><linearGradient id="xg" x1="0" y1="0" x2="0" y2="1"><stop offset="0" stop-color="#d4ead4"/><stop offset="1" stop-color="#a8d6a8"/></linearGradient></defs><path d="M464 1029.6 H491.2 V1061.5 H458.6 V1035 Q458.6 1029.6 464 1029.6 Z" fill="url(#xg)" stroke="#3f9a46" stroke-width="1.1"/><rect x="474" y="1039" width="16.5" height="3" fill="#8fcf8f"/><rect x="474" y="1043" width="16.5" height="3" fill="#6fba6f"/><path d="M464.5 1034.5 L478 1052.5" stroke="#8dc640" stroke-width="5"/><path d="M477.8 1034.5 L464.2 1052.5" stroke="#1f7a3c" stroke-width="4.5"/><path d="M459.2 1053 L474 1043.5 L492.5 1049.5 L489.5 1061 H459.2 Z" fill="#ffffff"/><path d="M481 1050 L487.5 1052 M479.5 1053.5 L486.5 1055.5 M478 1057 L485 1059" stroke="#5cb85c" stroke-width="1.4"/><rect x="446" y="1074.3" width="61" height="1.7" fill="#78b4e8"/><rect x="521.3" y="1074.3" width="60.7" height="1.7" fill="#78b4e8"/><rect x="533" y="1029.3" width="35.8" height="35.6" rx="2" fill="#fbfbfd"/><rect x="540.1" y="1035.1" width="20.9" height="9.9" fill="#4a5ef7"/><path d="M540.1 1048.1 H552.5 L551.1 1050 V1058.7 H540.1 Z" fill="#2e3ab3"/><path d="M1573 1051 L1582 1042 L1591 1051" fill="none" stroke="#fff" stroke-width="1.5"/><path d="M1620.9 1055.1 A5.5 5.5 0 0 1 1626.4 1049.6" fill="none" stroke="#fff" stroke-width="1.4"/><path d="M1615.9 1055.1 A10.5 10.5 0 0 1 1626.4 1044.6" fill="none" stroke="#fff" stroke-width="1.4"/><path d="M1610.4 1055.1 A16 16 0 0 1 1626.4 1039.1" fill="none" stroke="#fff" stroke-width="1.4"/><circle cx="1626.4" cy="1055.1" r="1.8" fill="#fff"/><path d="M1643.7 1043 H1648 L1655 1038.5 V1055.5 L1648 1051 H1643.7 Z" fill="none" stroke="#fff" stroke-width="1.4" stroke-linejoin="round"/><path d="M1658.54 1044.18 A3.8 3.8 0 0 1 1658.54 1049.82" fill="none" stroke="#fff" stroke-width="1.4"/><path d="M1660.82 1041.65 A7.2 7.2 0 0 1 1660.82 1052.35" fill="none" stroke="#fff" stroke-width="1.4"/><path d="M1663.09 1039.12 A10.6 10.6 0 0 1 1663.09 1054.88" fill="none" stroke="#fff" stroke-width="1.4"/><path d="M1852 1034.8 H1876 V1053.5 H1866 L1859 1059 V1053.5 H1852 Z" fill="#fff"/><path d="M1856 1039.5 H1872 M1856 1043.5 H1872 M1856 1047.5 H1866" stroke="#05070c" stroke-width="1.3"/><circle cx="1876" cy="1058.4" r="10.8" fill="#2a2a2a" stroke="#707070" stroke-width="1.4"/><rect x="1906.4" y="1016" width="1.6" height="60" fill="#8a8a8a"/></svg>
<div class="t " style="left:1683px;top:1038.56px;font-size:18px;line-height:18px;color:#fff;font-weight:400;font-family:'Liberation Sans';transform:scaleX(0.85);transform-origin:0 0;">РУС</div>
<div class="t" style="left:1479.6px;width:600px;text-align:center;top:1025.04px;font-size:17.2px;line-height:17.2px;color:#fff;font-weight:400;">4:45</div>
<div class="t" style="left:1480.2px;width:600px;text-align:center;top:1053.14px;font-size:17.2px;line-height:17.2px;color:#fff;font-weight:400;">12.04.2017</div>
<div class="t" style="left:1576.3px;width:600px;text-align:center;top:1051.06px;font-size:16px;line-height:16px;color:#fff;font-weight:700;">4</div>
</body></html>
